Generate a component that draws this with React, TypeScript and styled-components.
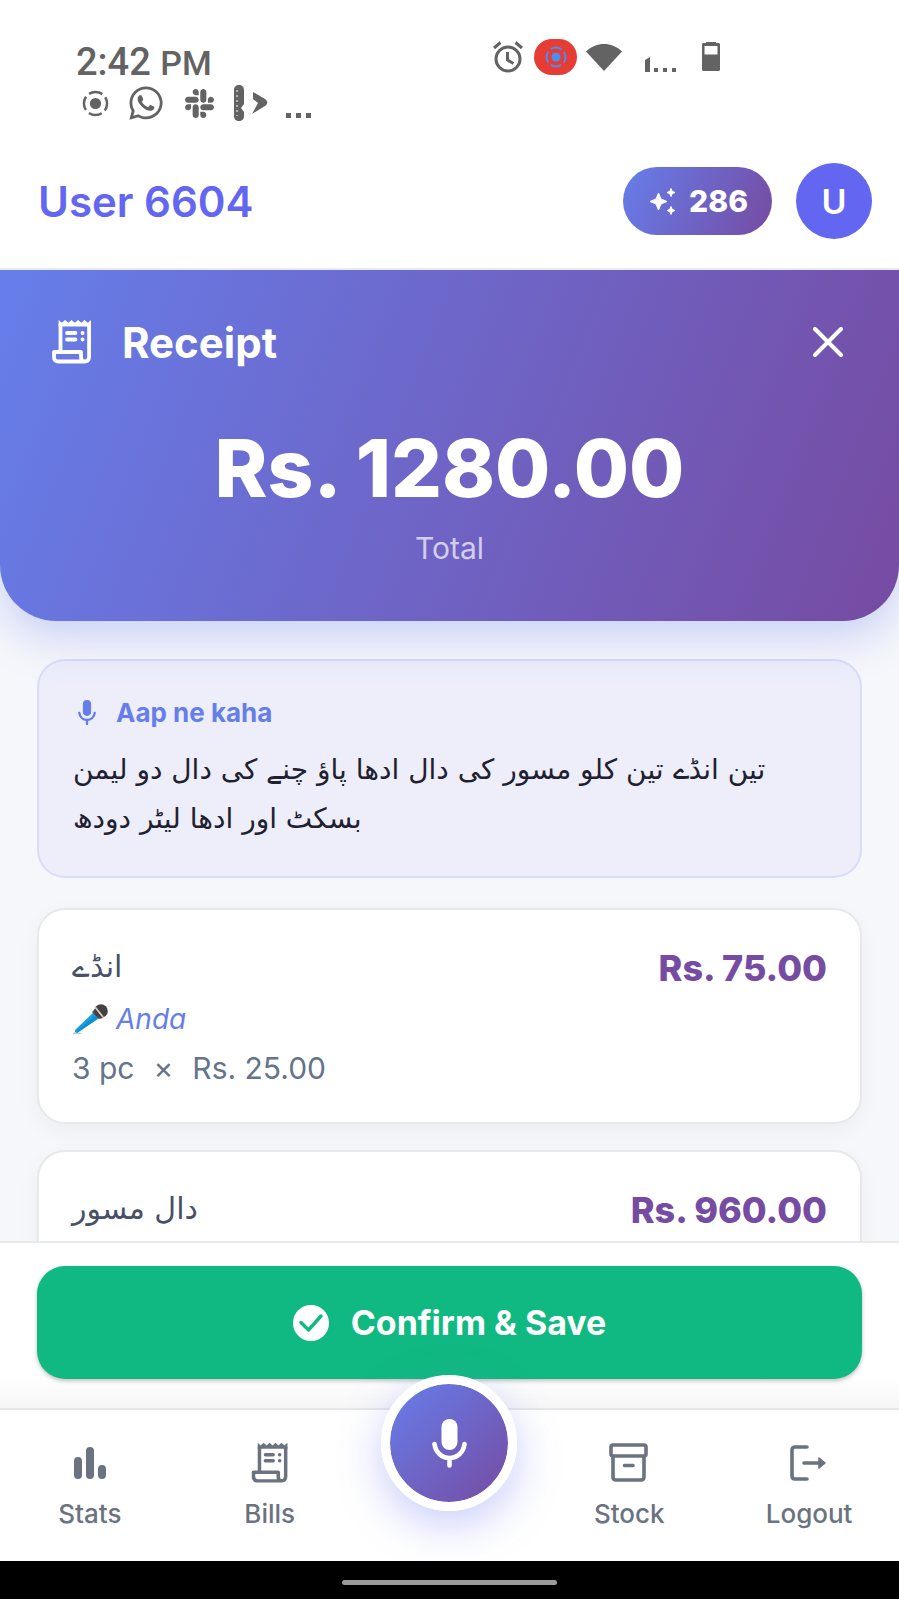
import React from "react";
import styled, { createGlobalStyle } from "styled-components";
import { FaSlack, FaWhatsapp } from "react-icons/fa";

const GlobalStyle = createGlobalStyle`
  * { box-sizing: border-box; }
  html, body { margin: 0; padding: 0; }
  body { font-family: Inter, "DejaVu Sans", sans-serif; background: #f6f7fb; }
  button { font: inherit; border: 0; padding: 0; background: none; cursor: pointer; }
  svg { display: block; flex: none; }
  p, h1, h2 { margin: 0; }
`;

const Shell = styled.div`
  height: 100vh;
  display: flex;
  flex-direction: column;
  overflow: hidden;
`;

const StatusBar = styled.div`
  display: flex;
  justify-content: space-between;
  align-items: flex-start;
  padding: 38px 179px 0 76px;
  height: 134px;
  flex: none;
  background: #fff;
  color: #636363;
  font-family: Roboto, sans-serif;
`;

const Clock = styled.div`
  font-size: 38px;
  line-height: 48px;
  font-weight: 500;
  small { font-size: 34px; }
`;

const Notices = styled.div`
  display: flex;
  align-items: center;
  gap: 18px;
  height: 32px;
  padding-left: 6px;
`;

const Indicators = styled.div`
  display: flex;
  align-items: center;
  height: 38px;
`;

const Recording = styled.span`
  display: flex;
  align-items: center;
  justify-content: center;
  width: 43px;
  height: 36px;
  margin: 0 9px 0 11px;
  border-radius: 18px;
  background: #e73c33;
  color: #4a90f0;
`;

const Signal = styled.span`
  margin: 0 25px 0 23px;
`;

const Header = styled.header`
  position: relative;
  display: flex;
  align-items: center;
  gap: 24px;
  height: 136px;
  flex: none;
  padding: 0 27px 0 38px;
  background: #fff;
  border-bottom: 2px solid #e9eaf2;
`;

const UserName = styled.h1`
  flex: 1;
  font-size: 42px;
  font-weight: 600;
  color: #6366f1;
`;

const Credits = styled.button`
  display: flex;
  align-items: center;
  gap: 12px;
  height: 68px;
  padding: 0 24px 0 26px;
  border-radius: 34px;
  background: linear-gradient(114deg, #667eea, #764ba2);
  color: #fff;
  && { font-size: 30px; font-weight: 800; }
`;

const Avatar = styled.button`
  width: 76px;
  height: 76px;
  border-radius: 50%;
  background: #6366f1;
  color: #fff;
  && { font-size: 34px; font-weight: 600; }
`;

const Hero = styled.section`
  flex: none;
  height: 351px;
  padding: 44px 52px 0;
  color: #fff;
  border-radius: 0 0 56px 56px;
  background: linear-gradient(111deg, #667eea, #764ba2);
  box-shadow: 0 16px 44px rgba(102, 126, 234, 0.32);
`;

const HeroTop = styled.div`
  display: flex;
  align-items: center;
  height: 56px;
  gap: 26px;
`;

const HeroTitle = styled.h2`
  flex: 1;
  font-size: 42px;
  font-weight: 700;
`;

const Close = styled.button`
  padding: 4px;
  color: #fff;
`;

const Amount = styled.p`
  margin-top: 48px;
  text-align: center;
  font-size: 80px;
  line-height: 100px;
  font-weight: 800;
`;

const AmountLabel = styled.p`
  margin-top: 10px;
  text-align: center;
  font-size: 30px;
  line-height: 40px;
  color: rgba(255, 255, 255, 0.7);
`;

const Content = styled.main`
  flex: 1;
  min-height: 0;
  overflow: hidden;
  position: relative;
  padding: 38px 37px 0;
`;

const Spoken = styled.section`
  height: 219px;
  padding: 32px 34px;
  border: 2px solid rgba(102, 126, 234, 0.16);
  border-radius: 28px;
  background: rgba(110, 95, 234, 0.06);
`;

const SpokenTitle = styled.h2`
  display: flex;
  align-items: center;
  gap: 20px;
  margin-bottom: 12px;
  padding-left: 5px;
  font-size: 26px;
  line-height: 40px;
  font-weight: 700;
  color: #667eea;
`;

const Urdu = styled.p<{ $item?: boolean }>`
  direction: rtl;
  text-align: left;
  white-space: nowrap;
  font-family: "DejaVu Sans", sans-serif;
  font-size: ${(p) => (p.$item ? 30 : 28)}px;
  line-height: 49px;
  color: ${(p) => (p.$item ? "#475066" : "#1f2130")};
`;

const Item = styled.article`
  display: flex;
  justify-content: space-between;
  align-items: flex-start;
  height: 216px;
  margin-top: 30px;
  padding: 32px 33px;
  border: 2px solid #e7e8ec;
  border-radius: 28px;
  background: #fff;
  box-shadow: 0 8px 24px rgba(0, 0, 0, 0.04);
  & + & { margin-top: 26px; }
`;

const Alias = styled.p`
  display: flex;
  align-items: center;
  gap: 8px;
  margin-top: 4px;
  font-size: 28px;
  line-height: 49px;
  font-style: italic;
  color: #667eea;
`;

const Quantity = styled.p`
  display: flex;
  gap: 19px;
  font-size: 30px;
  line-height: 49px;
  color: #64748b;
`;

const Price = styled.p`
  font-size: 36px;
  line-height: 52px;
  font-weight: 800;
  color: #764ba2;
`;

const ConfirmBar = styled.div`
  flex: none;
  position: relative;
  padding: 23px 37px 29px;
  border-top: 2px solid #e8e9ed;
  background: linear-gradient(#fff 80%, #f6f6f7);
`;

const Confirm = styled.button`
  display: flex;
  align-items: center;
  justify-content: center;
  gap: 22px;
  width: 100%;
  height: 113px;
  border-radius: 28px;
  background: #10b981;
  color: #fff;
  box-shadow: 0 2px 4px rgba(0, 0, 0, 0.25);
  && { font-size: 34px; font-weight: 700; }
`;

const Nav = styled.nav`
  flex: none;
  position: relative;
  display: grid;
  grid-template-columns: repeat(5, 1fr);
  height: 153px;
  border-top: 2px solid #e5e7eb;
  background: #fff;
`;

const NavLink = styled.a`
  display: flex;
  flex-direction: column;
  align-items: center;
  gap: 12px;
  padding-top: 31px;
  font-size: 26px;
  line-height: 34px;
  font-weight: 500;
  color: #6b7280;
  text-decoration: none;
`;

const Speak = styled.button`
  display: flex;
  align-items: center;
  justify-content: center;
  justify-self: center;
  width: 136px;
  height: 136px;
  margin-top: -35px;
  border: 9px solid #fff !important;
  border-radius: 50%;
  color: #fff;
  background: linear-gradient(135deg, #667eea, #764ba2) padding-box;
  box-shadow: 0 14px 44px rgba(99, 115, 241, 0.35);
`;

const SystemBar = styled.div`
  flex: none;
  display: flex;
  align-items: center;
  justify-content: center;
  height: 38px;
  padding-top: 4px;
  background: #000;
  position: relative;
`;

const HomeHandle = styled.span`
  width: 24%;
  height: 5px;
  border-radius: 3px;
  background: #9c9c9c;
`;

const CastIcon = ({ size }: { size: number }) => (
  <svg width={size} height={size} viewBox="0 0 28 28" fill="none" stroke="currentColor" strokeWidth="2.6">
    <circle cx="14" cy="14" r="5.8" fill="currentColor" stroke="none" />
    <circle cx="14" cy="14" r="12" strokeDasharray="14.500 4.350" strokeDashoffset="7.250" transform="rotate(90 14 14)" />
  </svg>
);

const MapsIcon = () => (
  <svg width="34" height="36" viewBox="0 0 34 36" fill="currentColor">
    <path d="M5 0c3 0 5 2 5 5v14l-3 4 3 4v4c0 3-2 5-5 5s-5-2-5-5V5c0-3 2-5 5-5z" />
    <path d="M19 7l12 7c3 2 3 5 0 7l-13 8 6-11-5-4z" />
    <path d="M3 5v26" stroke="#fff" strokeWidth="1" strokeDasharray="2 3" />
  </svg>
);

const Dots = ({ bar }: { bar?: boolean }) => (
  <svg width={bar ? 32 : 26} height="34" viewBox={bar ? "0 0 32 34" : "0 0 26 34"} fill="currentColor">
    {bar ? (
      <path d="M0 20l5-3v15H0zM9 28h4v4H9zM18 28h4v4h-4zM27 28h4v4h-4z" />
    ) : (
      <path d="M0 27h5v5H0zM10 27h5v5h-5zM20 27h5v5h-5z" />
    )}
  </svg>
);

const AlarmIcon = () => (
  <svg width="30" height="32" viewBox="0 0 30 32" fill="none" stroke="currentColor" strokeWidth="3">
    <circle cx="15" cy="18" r="12" />
    <path d="M14.500 11v8l6 3.500M1 7l6.500-5.500M29 7l-6.500-5.500" />
  </svg>
);

const WifiIcon = () => (
  <svg width="36" height="28" viewBox="0 0 36 28" fill="currentColor">
    <path d="M18 28L0 8.500C10-1.500 26-1.500 36 8.500z" />
  </svg>
);

const BatteryIcon = () => (
  <svg width="18" height="30" viewBox="0 0 18 30" fill="currentColor">
    <path fillRule="evenodd" d="M4 0h10v1h3l1 1v26l-1 1H1l-1-1V2l1-1h3zM2.500 4v8.500h13V4z" />
  </svg>
);

const SparkleIcon = () => (
  <svg width="28" height="28" viewBox="0 0 28 28" fill="currentColor" stroke="currentColor" strokeLinejoin="round">
    <path d="M9.500 6l2.500 6 6 2.500-6 2.500-2.500 6L7 17l-6-2.500L7 12z" />
    <path d="M22 1.500l1.200 2.800L26 5.500l-2.800 1.200L22 9.500l-1.200-2.800L18 5.500l2.800-1.200zM22 19.500l1.200 2.800 2.800 1.200-2.800 1.200L22 27.500l-1.200-2.800-2.800-1.200 2.800-1.200z" />
  </svg>
);

const ReceiptIcon = ({ viewBox = "0 0 44 44" }: { viewBox?: string }) => (
  <svg width="44" height="44" viewBox={viewBox} fill="none" stroke="currentColor" strokeWidth="3.800" strokeLinejoin="round">
    <path d="M6.600 0l3.240 2.800L13.080 0l3.240 2.800L19.560 0l3.240 2.800L26.040 0l3.240 2.800L32.520 0l3.240 2.800L39 0v6.500H6.600z" fill="currentColor" stroke="none" />
    <path d="M8.500 4v27M37.100 4v32.500q0 5-5 5H6.500q-4.500 0-4.500-4.500v-5h27v5q0 4.500 3.500 4.500" />
    <path d="M15 13h8.500M15 19.500h8.500M30.500 13h.1M30.500 19.500h.1" strokeLinecap="round" />
  </svg>
);

const CloseIcon = () => (
  <svg width="30" height="30" viewBox="0 0 30 30" stroke="currentColor" strokeWidth="4" strokeLinecap="round">
    <path d="M2 2l26 26M28 2L2 28" />
  </svg>
);

const MicIcon = ({ width }: { width: number }) => (
  <svg width={width} height={(width * 7) / 5} viewBox="0 0 35 49" fill="none" stroke="currentColor" strokeWidth="4.600" strokeLinecap="round">
    <rect x="9.500" y="0" width="16" height="31" rx="8" fill="currentColor" stroke="none" />
    <path d="M2.500 25c1 8 7 14 15 14s14-6 15-14M17.500 39v7.500" />
  </svg>
);

const MicrophoneArt = () => (
  <svg width="36" height="32" viewBox="0 0 36 32">
    <path d="M1 30c3-3 5 1 8-1" stroke="#c3c6ca" strokeWidth="1.500" fill="none" />
    <path d="M3 26L22 8l5 6L5 29l-2-1z" fill="#199fe0" />
    <path d="M5 27L24 11l3 3L5 29z" fill="#0c8fd4" />
    <path d="M20 8l3-3 8 9-4 1z" fill="#55514f" />
    <circle cx="29" cy="7" r="6.800" fill="#46403e" />
    <path d="M23 3l8 10" stroke="#cfd0d2" strokeWidth="1.800" />
  </svg>
);

const CheckIcon = () => (
  <svg width="36" height="36" viewBox="0 0 36 36">
    <circle cx="18" cy="18" r="18" fill="#fff" />
    <path d="M8 17.500l7.500 7.500L28 11" fill="none" stroke="#10b981" strokeWidth="3.400" strokeLinecap="round" strokeLinejoin="round" />
  </svg>
);

const StatsIcon = () => (
  <svg width="44" height="44" viewBox="0 0 44 44" fill="currentColor">
    <rect x="6" y="16" width="8" height="22" rx="4" />
    <rect x="18" y="6" width="8" height="32" rx="4" />
    <rect x="30" y="24" width="8" height="14" rx="4" />
  </svg>
);

const StockIcon = () => (
  <svg width="44" height="44" viewBox="0 0 44 44" fill="none" stroke="currentColor" strokeWidth="3.600" strokeLinejoin="round" strokeLinecap="round">
    <rect x="4" y="4" width="35" height="11" rx="2" />
    <path d="M6 15v21q0 3 3 3h25q3 0 3-3V15M17.500 24.500h8.500" />
  </svg>
);

const LogoutIcon = () => (
  <svg width="44" height="44" viewBox="0 0 44 44" fill="none" stroke="currentColor" strokeWidth="3.600" strokeLinecap="round">
    <path d="M20 6H8q-3 0-3 3v26q0 3 3 3h12M17 22h16" />
    <path d="M32 17l6 5-6 5z" fill="currentColor" strokeWidth="1.500" strokeLinejoin="round" />
  </svg>
);

export default function App() {
  return (
    <Shell>
      <GlobalStyle />
      <StatusBar>
        <div>
          <Clock>2:42 <small>PM</small></Clock>
          <Notices>
            <CastIcon size={27} />
            <FaWhatsapp size={38} />
            <FaSlack size={33} />
            <MapsIcon />
            <Dots />
          </Notices>
        </div>
        <Indicators>
          <AlarmIcon />
          <Recording><CastIcon size={22} /></Recording>
          <WifiIcon />
          <Signal><Dots bar /></Signal>
          <BatteryIcon />
        </Indicators>
      </StatusBar>

      <Header>
        <UserName>User 6604</UserName>
        <Credits type="button"><SparkleIcon />286</Credits>
        <Avatar type="button">U</Avatar>
      </Header>

      <Hero>
        <HeroTop>
          <ReceiptIcon />
          <HeroTitle>Receipt</HeroTitle>
          <Close type="button" aria-label="Close"><CloseIcon /></Close>
        </HeroTop>
        <Amount>Rs. 1280.00</Amount>
        <AmountLabel>Total</AmountLabel>
      </Hero>

      <Content>
        <Spoken>
          <SpokenTitle><MicIcon width={18} />Aap ne kaha</SpokenTitle>
          <Urdu lang="ur">
            تین انڈے تین کلو مسور کی دال ادھا پاؤ چنے کی دال دو لیمن
            <br />
            بسکٹ اور ادھا لیٹر دودھ
          </Urdu>
        </Spoken>
        <Item>
          <div>
            <Urdu lang="ur" $item>انڈے</Urdu>
            <Alias><MicrophoneArt />Anda</Alias>
            <Quantity><span>3 pc</span><span>×</span><span>Rs. 25.00</span></Quantity>
          </div>
          <Price>Rs. 75.00</Price>
        </Item>
        <Item>
          <Urdu lang="ur" $item>دال مسور</Urdu>
          <Price>Rs. 960.00</Price>
        </Item>
      </Content>

      <ConfirmBar>
        <Confirm type="button"><CheckIcon />Confirm &amp; Save</Confirm>
      </ConfirmBar>

      <Nav>
        <NavLink href="#stats"><StatsIcon />Stats</NavLink>
        <NavLink href="#bills"><ReceiptIcon viewBox="-4 -2 48 48" />Bills</NavLink>
        <Speak type="button" aria-label="Speak"><MicIcon width={35} /></Speak>
        <NavLink href="#stock"><StockIcon />Stock</NavLink>
        <NavLink href="#logout"><LogoutIcon />Logout</NavLink>
      </Nav>
      <SystemBar><HomeHandle /></SystemBar>
    </Shell>
  );
}
